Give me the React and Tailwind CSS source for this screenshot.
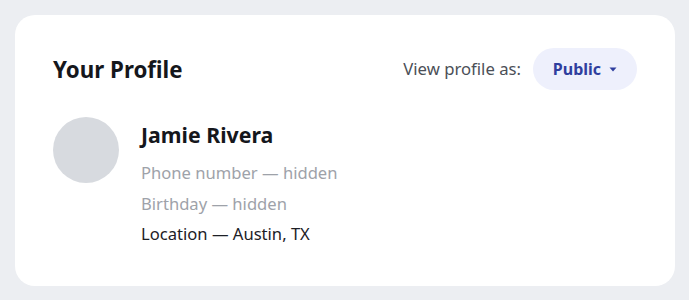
import React from 'react'

const FONT = { fontFamily: '"Segoe UI", "Noto Sans", "Open Sans", sans-serif' }

export default function App() {
    return (
        <div className="min-h-[300px] w-full bg-[#eceef2] p-[15px] pr-[14px] pb-[14px]" style={FONT}>
            <div className="h-[271px] rounded-[20px] bg-white px-[38px] pt-[33px]">
                {/* header row */}
                <div className="flex items-center justify-between">
                    <h1 className="text-[22.3px] font-bold text-[#15171c] leading-none pt-[3px]">Your Profile</h1>
                    <div className="flex items-center gap-3">
                        <span className="text-[16.7px] text-[#4b4f57]">View profile as:</span>
                        <button className="flex h-[42px] w-[104px] items-center justify-center gap-2 rounded-full bg-[#eef0fc] text-[16px] font-bold text-[#2f3e9e]">
                            Public
                            <svg width="8" height="5" viewBox="0 0 8 5"><path d="M0.5 0.5h7L4 4.5z" fill="#2f3e9e" /></svg>
                        </button>
                    </div>
                </div>

                <div className="mt-[27px] flex gap-[22px]">
                    <div className="h-[66px] w-[66px] shrink-0 rounded-full bg-[#d7dadf]"></div>
                    <div className="pt-[4px]">
                        <div className="text-[21.3px] font-bold leading-[28px] text-[#15171c]">Jamie Rivera</div>
                        <div className="mt-[9px] flex flex-col text-[16.6px] leading-[30.5px]">
                            <span className="text-[#9ea2a9]">Phone number — hidden</span>
                            <span className="text-[#9ea2a9]">Birthday — hidden</span>
                            <span className="text-[#1d2026]">Location — Austin, TX</span>
                        </div>
                    </div>
                </div>
            </div>
        </div>
    )
}
